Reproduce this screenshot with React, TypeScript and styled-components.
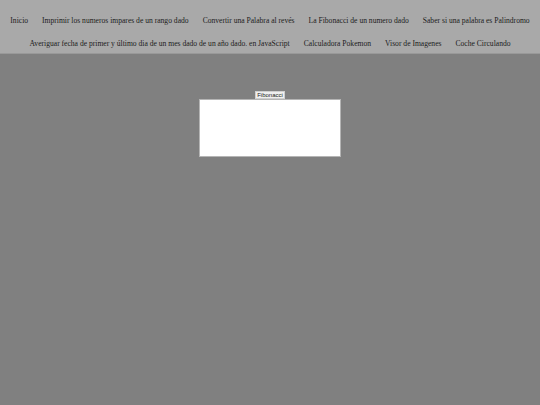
import styled, { createGlobalStyle } from "styled-components";

const GlobalStyle = createGlobalStyle`
  html, body {
    margin: 0;
    padding: 0;
    background-color: #808080;
    font-family: "Liberation Serif", "Times New Roman", serif;
  }
`;

const links = [
  "Inicio",
  "Imprimir los numeros impares de un rango dado",
  "Convertir una Palabra al revés",
  "La Fibonacci de un numero dado",
  "Saber si una palabra es Palindromo",
  "Averiguar fecha de primer y último dia de un mes dado de un año dado. en JavaScript",
  "Calculadora Pokemon",
  "Visor de Imagenes",
  "Coche Circulando",
];

const Nav = styled.nav`
  display: flex;
  flex-wrap: wrap;
  justify-content: center;
  row-gap: 14px;
  padding: 15.5px 0 5.5px;
  background-color: #a9a9a9;
  border-bottom: 1px solid #999999;
`;

const NavLink = styled.a`
  padding: 0 7px;
  font-size: 7.6px;
  line-height: 9px;
  color: #1c1c1c;
  text-decoration: none;
  white-space: nowrap;
`;

const Main = styled.main`
  display: flex;
  flex-direction: column;
  align-items: center;
  padding-top: 37px;
`;

const Label = styled.button`
  font-family: "Liberation Sans", Arial, sans-serif;
  font-size: 6px;
  line-height: 6px;
  padding: 0 1px;
  margin: 0;
  background: #efefef;
  color: #222;
  border: 1px solid #cfcfcf;
`;

const Area = styled.textarea`
  box-sizing: border-box;
  width: 142px;
  height: 58px;
  margin: 0;
  border: 1px solid #b5b5b5;
  background: #ffffff;
  resize: none;
`;

export default function App() {
  return (
    <>
      <GlobalStyle />
      <Nav>
        {links.map((l) => (
          <NavLink key={l} href="#">
            {l}
          </NavLink>
        ))}
      </Nav>
      <Main>
        <Label>Fibonacci</Label>
        <Area />
      </Main>
    </>
  );
}
